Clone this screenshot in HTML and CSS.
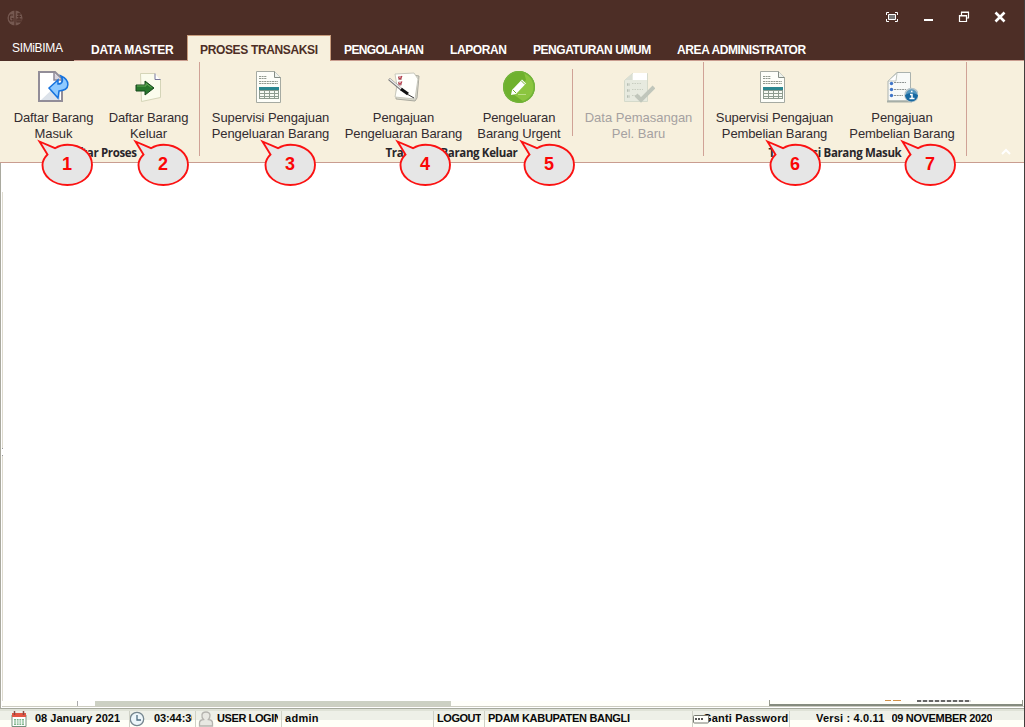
FILE: index.html
```html
<!DOCTYPE html>
<html lang="id">
<head>
<meta charset="utf-8">
<title>SIMiBIMA</title>
<link rel="stylesheet" href="styles.css">
</head>
<body>
<svg class="defs" width="0" height="0" aria-hidden="true">
  <symbol id="table-doc" viewBox="0 0 32 32">
    <path d="M3.500 .500h18l6 6v25h-24z" fill="#fdfef9" stroke="#a5aaa2"/>
    <path d="M21.500 .500v6h6" fill="#eef2ec" stroke="#858d85"/>
    <path d="M6 5.500h8M6 7.500h8M6 10.500h19M6 12.500h19" stroke="#92998f" stroke-dasharray="2 .6"/>
    <path d="M6 16h20v12H6z" fill="#8e9c90"/>
    <path d="M6 16h20v3H6z" fill="#2b8790"/>
    <path d="M7 20h4v2H7zm5 0h4v2h-4zm5 0h4v2h-4zm5 0h3v2h-3zM7 23h4v2H7zm5 0h4v2h-4zm5 0h4v2h-4zm5 0h3v2h-3zM7 26h4v1H7zm5 0h4v1h-4zm5 0h4v1h-4zm5 0h3v1h-3z" fill="#f7faf4"/>
  </symbol>
  <symbol id="callout" viewBox="0 0 56 48">
    <path d="M2.500 2.500L18 9.200C21.500 7 25.500 5.700 30.500 5.700C44.500 5.700 55 14.500 55 25.800S44.500 46 30.300 46S5.500 37 5.500 26C5.500 22 7.500 18.500 10.500 15.500z" fill="#e6e6e6" stroke="#fb1212" stroke-width="1.900" stroke-linejoin="miter"/>
  </symbol>
</svg>
<div class="window">
  <header class="titlebar">
    <svg class="logo" viewBox="0 0 16 16"><circle cx="8" cy="8" r="7.500" fill="#755850"/><path d="M8 0v16M6 5H3.500L2.500 6.500v3l1 1.500H6V8.500H4.500M10 4h4M10 6.500h4M10 9h4v3h-4zM12 3v9" fill="none" stroke="#4d2e26" stroke-width="1.200"/></svg>
    <div class="controls">
      <svg viewBox="0 0 14 12"><path d="M1.500 4v-2.500h2.500M10 1.500h2.500v2.500M12.500 8v2.500h-2.500M4 10.500h-2.500v-2.500" fill="none" stroke="#fff"/><path d="M3.500 3.500h7v5h-7z" fill="#777" stroke="#fff"/></svg>
      <svg viewBox="0 0 14 12"><path d="M3 8h9v2H3z" fill="#fff"/></svg>
      <svg viewBox="0 0 14 12"><path d="M4.500 4V1.500h7v5.500H9.500M4 1h8" fill="none" stroke="#fff" stroke-width="1.200"/><path d="M2.500 4.500h7v6h-7zM2.500 5h7" fill="none" stroke="#fff" stroke-width="1.200"/></svg>
      <svg viewBox="0 0 14 12"><path d="M2.500 1.500l9 9m0-9l-9 9" stroke="#fff" stroke-width="2.600"/></svg>
    </div>
  </header>
  <nav class="tabs">
    <div class="app-tab">SIMiBIMA</div>
    <div class="tab t1">DATA MASTER</div>
    <div class="tab t2 active">PROSES TRANSAKSI</div>
    <div class="tab t3">PENGOLAHAN</div>
    <div class="tab t4">LAPORAN</div>
    <div class="tab t5">PENGATURAN UMUM</div>
    <div class="tab t6">AREA ADMINISTRATOR</div>
  </nav>
  <section class="ribbon">
    <div class="group g1">
      <div class="buttons">
        <button class="cmd w95"><svg viewBox="0 0 32 32"><path d="M1 1h16l7 7v22H1z" fill="#fff" stroke="#928d98" stroke-width="2"/><path d="M3 29L22 11v18z" fill="#dce2ea"/><path d="M16 2v7h8" fill="#d8d5df" stroke="#8f8998" stroke-width="1.500"/><path d="M11 17l9-8v4c4 0 6-3 3-8 9 4 10 14-2 15l-1 7z" fill="#8fcaff" stroke="#1673df" stroke-width="1.500"/></svg><span>Daftar Barang<br>Masuk</span></button>
        <button class="cmd w95"><svg viewBox="0 0 32 32"><path d="M7.500 2.500h14l6 6v18l-19 4z" fill="#fbfced" stroke="#d5d5b8"/><path d="M22 2.500v6h5.500" fill="#fff" stroke="#77769a"/><path d="M3 14h9v-4l9 7-9 7v-4H3z" fill="#27762b" stroke="#17491d"/><path d="M4 15h9v-2.500l5.500 4" fill="none" stroke="#64aa57"/></svg><span>Daftar Barang<br>Keluar</span></button>
      </div>
      <div class="caption">Daftar Proses</div>
    </div>
    <div class="group g2">
      <div class="buttons">
        <button class="cmd w133 shift"><svg class="table"><use href="#table-doc"/></svg><span>Supervisi Pengajuan<br>Pengeluaran Barang</span></button>
        <button class="cmd w133"><svg viewBox="0 0 32 32"><path d="M9 4l11-1 11 2-2 22-2 3-19-2z" fill="#d9d9cc" stroke="#aaa99e"/><path d="M7 3l19-1 4 6-3 20-20-2 2-11z" fill="#fffffb" stroke="#c9c9bd"/><path d="M10.500 5.500h3v3h-3zM10.500 11h3v3h-3z" fill="#fff" stroke="#c3a0a0"/><path d="M10.500 6l1.500 2 2-3M10.500 11.500l1.500 2 2-3" fill="none" stroke="#b83445" stroke-width="1.200"/><path d="M1 8l13 11" stroke="#777" stroke-width="2.800"/><path d="M1.500 8l12 10" stroke="#eee" stroke-width="1.400"/><path d="M13 18l7 5" stroke="#111" stroke-width="3"/><path d="M19 23l7 4" stroke="#333"/></svg><span>Pengajuan<br>Pengeluaran Barang</span></button>
        <button class="cmd w98"><svg viewBox="0 0 32 32"><circle cx="16" cy="16" r="16" fill="#6fb12d"/><path d="M21 1a16 16 0 010 30l-11-8L23 9z" fill="#8bc53f"/><circle cx="16" cy="16" r="15.200" fill="none" stroke="#72b33a" stroke-width="1.500"/><path d="M8 24l1-5L19 8.500l4 4L13 23z" fill="#fff"/><path d="M18 9.500l4 4M10 19l3 3" stroke="#73b22e"/><path d="M15 23.500h8" stroke="#b9df85"/></svg><span>Pengeluaran<br>Barang Urgent</span></button>
        <i class="divider"></i>
        <button class="cmd w129" disabled><svg viewBox="0 0 32 32"><path d="M1.500 9.500l8-7h15v28h-23z" fill="#e7eadf" stroke="#d5dacb"/><path d="M10 2h14v7H10z" fill="#fff"/><path d="M2 9h7V3z" fill="#dadfd4"/><path d="M4 13.500h3M4 19.500h3M4 25.500h3" stroke="#b7beb3" stroke-width="2.500" stroke-dasharray="1.500 1"/><path d="M9 12.500h9M9 18.500h11M9 24.500h8" stroke="#c9cec1" stroke-dasharray="1.500 1"/><path d="M13 24l5 5L31 16" fill="none" stroke="#c0c6bb" stroke-width="4"/></svg><span>Data Pemasangan<br>Pel. Baru</span></button>
      </div>
      <div class="caption">Transaksi Barang Keluar</div>
    </div>
    <div class="group g3">
      <div class="buttons">
        <button class="cmd w133 shift"><svg class="table"><use href="#table-doc"/></svg><span>Supervisi Pengajuan<br>Pembelian Barang</span></button>
        <button class="cmd w122"><svg viewBox="0 0 32 32"><path d="M2 10l9-8.500h13.500V30H2z" fill="#f8faf8" stroke="#aab2ae"/><path d="M2 10h8l1-8z" fill="#fff" stroke="#bdc4be"/><path d="M1 30.500h25" stroke="#a6aea7" stroke-width="2"/><circle cx="5.500" cy="12.500" r="1.700" fill="#3f75c8"/><circle cx="5.500" cy="18.500" r="1.700" fill="#3f75c8"/><circle cx="5.500" cy="24.500" r="1.700" fill="#3f75c8"/><path d="M8 11.500h12M8 18.500h12M8 24.500h9" stroke="#8c9291" stroke-dasharray="2 .7"/><circle cx="25.500" cy="24" r="6.500" fill="#5597bf" stroke="#b5c4ca" stroke-width="1.500"/><path d="M19 24q6-4 13 0a6.500 6.500 0 01-13 0" fill="#1769a1"/><path d="M24 23.500h2v4m-2.500 0h5M25 20.500h1.500" fill="none" stroke="#fff" stroke-width="1.500"/></svg><span>Pengajuan<br>Pembelian Barang</span></button>
      </div>
      <div class="caption">Transaksi Barang Masuk</div>
    </div>
    <svg class="collapse" viewBox="0 0 10 8"><path d="M1 6l4-4 4 4" fill="none" stroke="#fff" stroke-width="2"/></svg>
  </section>
  <main class="workspace">
    <div class="splitter"></div>
    <div class="bottom-left"></div>
    <div class="hscroll"></div>
    <div class="hidden-panel"><i></i><b></b></div>
  </main>
  <footer class="status">
    <div class="cell c-date"><svg viewBox="0 0 16 16"><path d="M1 4h14v11.500H1z" fill="#fff" stroke="#74917e"/><path d="M1 2h14v4H1z" fill="#e25543"/><path d="M3.500 0v4M12.500 0v4" stroke="#884a43" stroke-width="1.500"/><path d="M3 8h10v6H3z" fill="#7db58a"/><path d="M3 10h10M3 12h10M5.500 8v6M8 8v6M10.500 8v6" stroke="#fff" stroke-width=".8"/></svg><span>08 January 2021</span></div>
    <div class="cell c-time"><svg viewBox="0 0 16 16"><circle cx="7" cy="8" r="6.700" fill="#edf6fa" stroke="#75868f" stroke-width="1.300"/><path d="M7 4v5h4" fill="none" stroke="#506f83" stroke-width="1.300"/></svg><span>03:44:36</span></div>
    <div class="cell c-user"><svg viewBox="0 0 16 16"><path d="M1.500 15v-3q0-3 4-3.500-2-2-1.500-5Q4.500 1 8 1t4 3q0 3-1.500 4.500 4 .5 4 3.500v3z" fill="#e8e8e2" stroke="#b5b4af" stroke-width="1.300"/></svg><span>USER LOGIN</span></div>
    <div class="cell c-admin"><span>admin</span></div>
    <div class="cell c-logout"><span>LOGOUT</span></div>
    <div class="cell c-org"><span>PDAM KABUPATEN BANGLI</span></div>
    <div class="cell c-pass"><svg viewBox="0 0 16 9"><rect x=".5" y=".5" width="15" height="7.500" rx="1" fill="#fffffa" stroke="#777b72"/><path d="M2 4h2M5 4h2M8 4h2" stroke="#555" stroke-width="2"/></svg><span>Ganti Password</span></div>
    <div class="cell c-version"><span>Versi : 4.0.11</span><span>09 NOVEMBER 2020</span></div>
  </footer>
  <div class="callout n1"><svg><use href="#callout"/></svg><b>1</b></div>
  <div class="callout n2"><svg><use href="#callout"/></svg><b>2</b></div>
  <div class="callout n3"><svg><use href="#callout"/></svg><b>3</b></div>
  <div class="callout n4"><svg><use href="#callout"/></svg><b>4</b></div>
  <div class="callout n5"><svg><use href="#callout"/></svg><b>5</b></div>
  <div class="callout n6"><svg><use href="#callout"/></svg><b>6</b></div>
  <div class="callout n7"><svg><use href="#callout"/></svg><b>7</b></div>
</div>
</body>
</html>
```

FILE: styles.css
```css
* { box-sizing: border-box; }
body { margin: 0; font-family: "Liberation Sans", Arial, sans-serif; }
.defs { position: absolute; }
svg { display: block; flex: none; }
.window { position: relative; width: 1025px; height: 727px; display: flex; flex-direction: column; overflow: hidden; background: #fff; border-right: 1px solid #423d3c; }
.titlebar { height: 35px; flex: none; background: #4d2e26; display: flex; justify-content: space-between; padding: 10px 17px 0 7px; }
.logo { width: 16px; height: 16px; }
.controls { display: flex; gap: 22px; padding-top: 1px; }
.controls svg { width: 14px; height: 12px; }
.tabs { height: 26px; flex: none; background: #4d2e26; display: flex; border-bottom: 1px solid #c99d90; color: #fff; }
.app-tab { width: 74px; height: 26px; background: #4d2e26; padding: 6px 0 0 12px; font-size: 12px; line-height: 14px; letter-spacing: -.35px; }
.tab { font-size: 12px; line-height: 14px; font-weight: bold; padding: 8px 0 0 13px; white-space: nowrap; letter-spacing: -.4px; }
.t1 { width: 113px; padding-left: 17px; letter-spacing: -.25px; }
.t2 { width: 144px; letter-spacing: -.35px; }
.t3 { width: 106px; letter-spacing: -.6px; }
.t4 { width: 83px; }
.t5 { width: 144px; letter-spacing: -.45px; }
.active { height: 26px; background: #f7f0dd; color: #4d2e26; border: 1px solid #c99d7d; border-bottom: 0; padding: 7px 0 0 12px; }
.ribbon { height: 102px; flex: none; display: flex; background: #f7f0dd; border-bottom: 1px solid #c99d90; padding-top: 1px; }
.group { height: 94px; border-right: 1px solid #d0a296; display: flex; flex-direction: column; }
.g1 { width: 200px; padding-left: 6px; }
.g2 { width: 504px; padding-left: 4px; }
.g3 { width: 263px; padding-left: 4px; }
.buttons { display: flex; height: 83px; }
.cmd { border: 0; padding: 9px 0 0; margin: 0; background: none; height: 83px; flex: none; display: flex; flex-direction: column; align-items: center; font: 13px/16px "Liberation Sans", Arial, sans-serif; letter-spacing: -.1px; color: #332c30; white-space: nowrap; }
.cmd svg { width: 32px; height: 32px; margin-bottom: 7px; }
.shift svg { margin-right: 3px; }
.cmd:disabled { color: #a5a1a1; letter-spacing: 0; }
.w95 { width: 95px; }
.w133 { width: 133px; }
.w98 { width: 98px; }
.w122 { width: 122px; }
.w129 { width: 129px; }
.divider { width: 1px; height: 67px; background: #d0a296; margin: 7px 1px 0 4px; }
.caption { font: bold 11.5px/16px "Open Sans", sans-serif; letter-spacing: -.35px; color: #29262a; text-align: center; white-space: nowrap; }
.g1 .caption { padding-right: 5px; }
.g2 .caption { padding-right: 4px; }
.g3 .caption { padding-right: 4px; }
.collapse { width: 10px; height: 8px; margin: 86px 0 0 34px; }
.workspace { flex: 1; position: relative; border-left: 1px solid #a9a99e; border-bottom: 1px solid #a5a99c; }
.splitter { position: absolute; left: 1px; top: 29px; width: 1px; height: 515px; background: linear-gradient(#dedbcf 0 256px, #999 256px 257px, #fff 257px 263px, #999 263px 264px, #dedbcf 264px); }
.bottom-left { position: absolute; left: 1px; bottom: 1px; width: 1022px; height: 6px; background: #fffffa; border-bottom: 1px solid #ccccc0; }
.hscroll { position: absolute; left: 76px; bottom: 2px; width: 374px; height: 5px; border-left: 1px solid #aaa; background: linear-gradient(90deg, #fff 17px, #ccd0c3 17px); }
.hidden-panel { position: absolute; left: 768px; bottom: 2px; width: 254px; height: 6px; border: 1px solid #999c90; border-bottom: 2px solid #858b7e; border-top: 0; display: flex; gap: 16px; padding-left: 115px; }
.hidden-panel i { width: 16px; height: 1px; background: linear-gradient(90deg, #d29148 6px, #fff 6px 8px, #d29148 8px); }
.hidden-panel b { width: 54px; height: 2px; background: repeating-linear-gradient(90deg, #666 0 4px, #ddd 4px 6px); }
.status { height: 18px; flex: none; background: linear-gradient(#dfe2d7 0 2px, #eef0e8 2px 11px, #fffff7 11px); display: flex; font: bold 11px/14px "Liberation Sans", Arial, sans-serif; color: #090909; }
.cell { height: 16px; margin-top: 2px; display: flex; overflow: hidden; white-space: nowrap; border-right: 1px solid #cfd1c6; flex: none; }
.cell svg { width: 16px; height: 16px; }
.c-date { width: 130px; padding-left: 11px; gap: 8px; }
.c-time { width: 66px; padding: 0 3px 0 0; gap: 8px; letter-spacing: -.1px; }
.c-user { width: 86px; padding: 0 3px 0 2px; gap: 3px; letter-spacing: -.4px; }
.c-admin { width: 152px; padding-left: 3px; letter-spacing: .3px; }
.c-logout { width: 51px; padding-left: 3px; letter-spacing: -.45px; }
.c-org { width: 208px; padding-left: 3px; letter-spacing: -.3px; }
.c-pass { width: 97px; position: relative; padding-left: 10px; letter-spacing: .17px; }
.c-pass svg { width: 16px; height: 9px; position: absolute; left: 0; top: 4px; }
.c-version { padding-left: 26px; border: 0; gap: 7px; }
.c-version span:first-child { letter-spacing: .18px; }
.c-version span:last-child { letter-spacing: -.35px; }
.cell span { overflow: hidden; }
.callout { position: absolute; top: 139px; width: 56px; height: 48px; }
.callout svg { width: 56px; height: 48px; }
.callout b { position: absolute; left: 5px; top: 15px; width: 50px; text-align: center; font-size: 18px; line-height: 20px; color: #fb0606; }
.n1 { left: 37px; }
.n2 { left: 133px; }
.n3 { left: 260px; }
.n4 { left: 395px; }
.n5 { left: 519px; }
.n6 { left: 765px; }
.n7 { left: 900px; }
```
